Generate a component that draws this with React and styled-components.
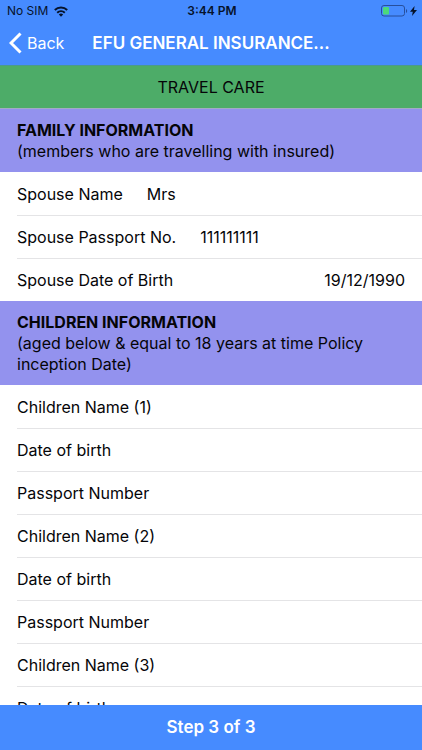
import React from "react";
import styled, { createGlobalStyle } from "styled-components";

const Global = createGlobalStyle`
  *, *::before, *::after { box-sizing: border-box; }
  html, body, #root { height: 100%; }
  body { margin: 0; background: #fff; color: #050508; font: 16px/20px Inter, "Liberation Sans", sans-serif; }
  button, input { font: inherit; color: inherit; border: 0; padding: 0; margin: 0; background: none; }
`;
const Screen = styled.div`
  height: 100%; display: flex; flex-direction: column; overflow: hidden;
`;
const StatusBar = styled.div`
  flex: none; display: grid; grid-template-columns: 1fr auto 1fr; align-items: center;
  height: 22px; padding: 0 5px 0 7px; background: #468bff; color: #06132b; font-size: 12px; line-height: 22px;
`;
const Carrier = styled.span`display: flex; align-items: center; gap: 6px;`;
const Time = styled.span`font-weight: 600;`;
const Power = styled.span`display: flex; align-items: center; justify-content: flex-end; gap: 2px;`;
const NavBar = styled.header`
  flex: none; display: grid; grid-template-columns: 1fr auto 1fr; align-items: center;
  height: 43px; padding: 0 9px 2px; background: #468bff; color: #fff;
`;
const BackButton = styled.button`
  display: flex; align-items: center; gap: 5px; justify-self: start; cursor: pointer;
  && { color: #fff; }
`;
const Title = styled.h1`margin: 0; font-size: 17px; line-height: 22px; font-weight: 600; white-space: nowrap;`;
const Banner = styled.div`
  flex: none; height: 44px; line-height: 43px; text-align: center; background: #4dac68;
  border-top: 1px solid #4b9a8c; border-bottom: 1px solid #a3abc4;
`;
const Content = styled.main`
  flex: 1; min-height: 0; overflow-y: auto; scrollbar-width: none;
`;
const SectionHead = styled.div`
  padding: 11px 17px 10px; background: #9392ee;
`;
const SectionTitle = styled.h2`margin: 0; font-size: 16px; line-height: 21px; font-weight: 700;`;
const SectionNote = styled.p`margin: 0; line-height: 21px;`;
const Row = styled.label`
  display: flex; align-items: center; gap: 24px; height: 43px; margin-left: 17px; padding-right: 17px;
  white-space: nowrap;
  & + & { border-top: 1px solid #e4e4e6; }
`;
const Field = styled.input`
  flex: 1; min-width: 0; height: 30px; outline: 0; text-align: ${(p) => (p.$end ? "right" : "left")};
`;
const Footer = styled.button`
  flex: none; height: 45px; cursor: pointer;
  && { padding-bottom: 2px; background: #468bff; color: #fff; font-size: 17px; font-weight: 600; }
`;

const children = [1, 2, 3].flatMap((n) => [`Children Name (${n})`, "Date of birth", "Passport Number"]);

export default function App() {
  return (
    <Screen>
      <Global />
      <StatusBar>
        <Carrier>
          No SIM
          <svg width="14" height="11" viewBox="0 0 14 11" fill="none" stroke="currentColor" strokeWidth="2">
            <path d="M.8 4a9 9 0 0 1 12.4 0M3.2 6.7a5.5 5.5 0 0 1 7.6 0" />
            <path d="M7 10.8 4.8 8.6a3 3 0 0 1 4.4 0z" fill="currentColor" stroke="none" />
          </svg>
        </Carrier>
        <Time>3:44 PM</Time>
        <Power>
          <svg width="27" height="12" viewBox="0 0 27 12">
            <rect x=".5" y=".5" width="23" height="10.5" rx="2.5" fill="none" stroke="#274f9c" />
            <rect x="2" y="2" width="6" height="7.5" rx="1" fill="#4cd97a" />
            <path d="M25 4c1.6.6 1.6 3.4 0 4z" fill="#274f9c" />
          </svg>
          <svg width="7" height="10" viewBox="0 0 7 10"><path d="M4.6 0 0 5.7h2.8L2 10l5-5.9H4z" fill="currentColor" /></svg>
        </Power>
      </StatusBar>
      <NavBar>
        <BackButton type="button">
          <svg width="13" height="22" viewBox="0 0 13 22" fill="none" stroke="currentColor" strokeWidth="3"><path d="M11.5 1.5 2 11l9.5 9.5" /></svg>
          Back
        </BackButton>
        <Title>EFU GENERAL INSURANCE...</Title>
      </NavBar>
      <Banner>TRAVEL CARE</Banner>
      <Content>
        <SectionHead>
          <SectionTitle>FAMILY INFORMATION</SectionTitle>
          <SectionNote>(members who are travelling with insured)</SectionNote>
        </SectionHead>
        <Row>Spouse Name<Field defaultValue="Mrs" /></Row>
        <Row>Spouse Passport No.<Field defaultValue="111111111" /></Row>
        <Row>Spouse Date of Birth<Field $end defaultValue="19/12/1990" /></Row>
        <SectionHead>
          <SectionTitle>CHILDREN INFORMATION</SectionTitle>
          <SectionNote>(aged below &amp; equal to 18 years at time Policy inception Date)</SectionNote>
        </SectionHead>
        {children.map((c, i) => <Row key={i}>{c}<Field /></Row>)}
      </Content>
      <Footer type="button">Step 3 of 3</Footer>
    </Screen>
  );
}
